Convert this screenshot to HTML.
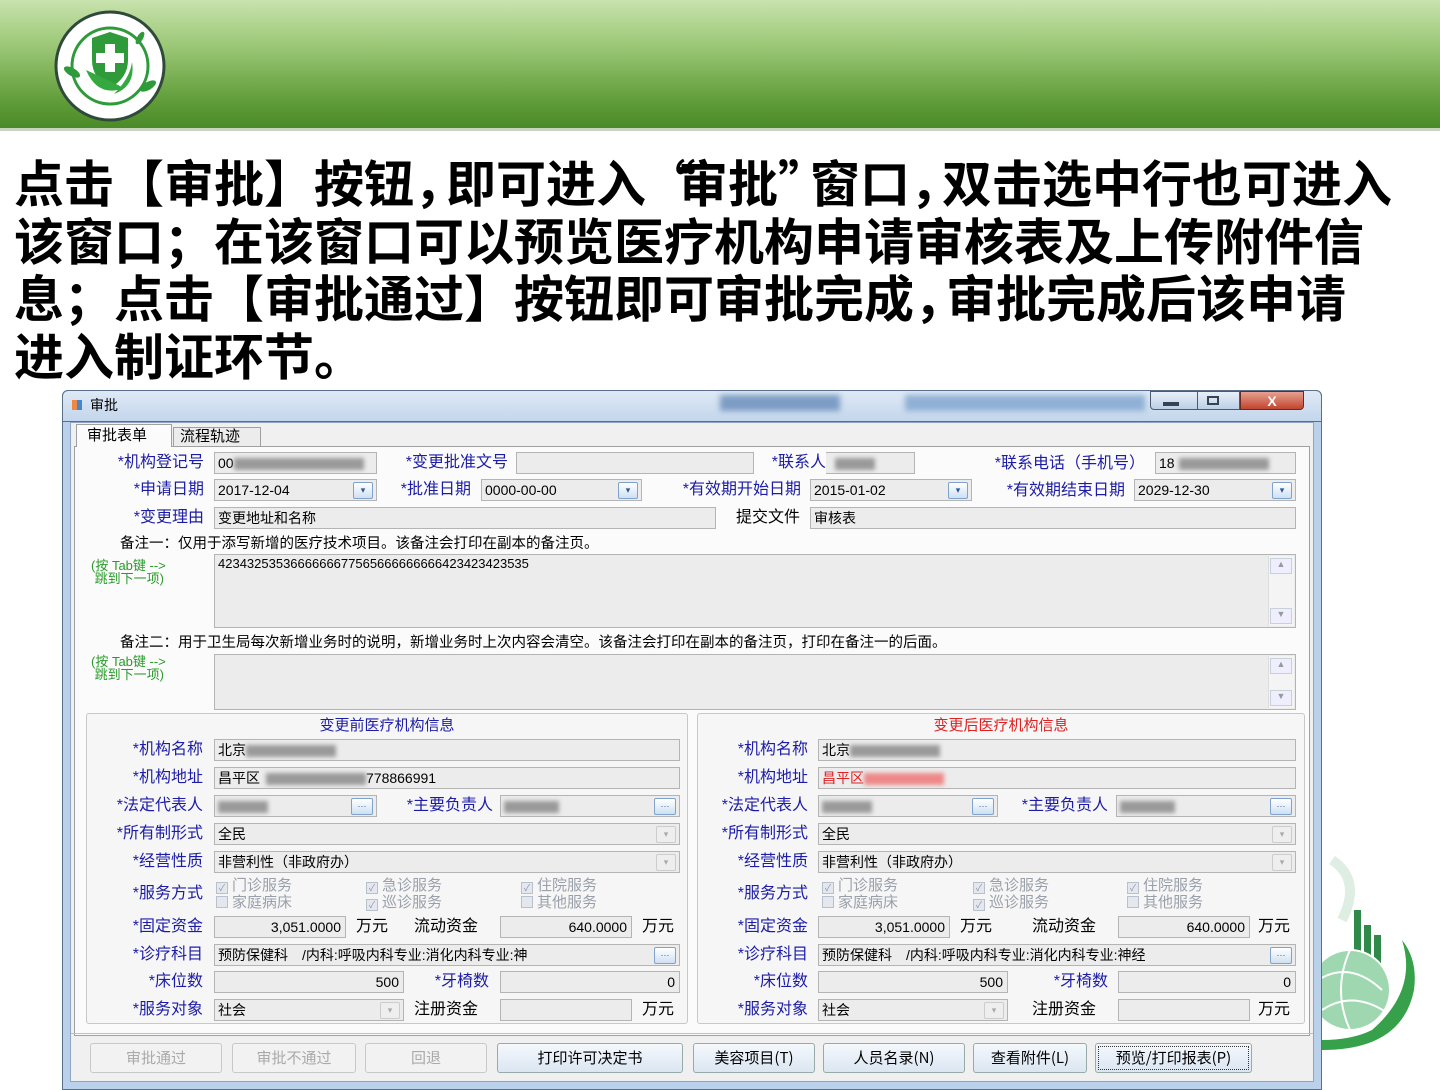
<!DOCTYPE html>
<html><head><meta charset="utf-8">
<style>
*{margin:0;padding:0;box-sizing:border-box}
body{width:1440px;height:1080px;position:relative;overflow:hidden;background:#fff;font-family:"Liberation Sans","Noto Sans CJK SC",sans-serif}
.hdr{position:absolute;left:0;top:0;width:1440px;height:128px;background:linear-gradient(#c9e3ae,#9cc877 35%,#5f9c38 80%,#4a8a28)}
.hline{position:absolute;left:0;top:128px;width:1440px;height:3px;background:#c8d4c0}
.title{position:absolute;left:14px;top:153px;width:1430px;font-size:50px;line-height:57.5px;font-weight:bold;color:#000;font-family:"Noto Sans CJK SC",sans-serif;white-space:nowrap}
.p{letter-spacing:-18px}
.a{position:absolute;white-space:nowrap}
.win{position:absolute;left:62px;top:390px;width:1260px;height:700px;background:#b9d1ea;border:1px solid #5a6f88;border-radius:6px 6px 0 0}
.tbar{position:absolute;left:62px;top:390px;width:1260px;height:32px;background:linear-gradient(#dfe9f5,#c3d6ec);border-radius:6px 6px 0 0;border:1px solid #5a6f88}
.client{position:absolute;left:70px;top:422px;width:1244px;height:660px;background:#f0f0f0;border:1px solid #8ea4c0}
.page{position:absolute;left:74px;top:446px;width:1236px;height:590px;background:#fbfbfb;border:1px solid #a0a0a0}
.lb{position:absolute;font-size:16px;color:#1c1ca8;text-align:right;white-space:nowrap;line-height:22px}
.bk{color:#000}
.in{position:absolute;height:22px;background:#ececec;border:1px solid #b4b4b4;font-size:14px;line-height:20px;padding-left:3px;color:#000;white-space:nowrap;overflow:hidden}
.r{text-align:right;padding-right:4px}
.dd{position:absolute;width:20px;height:17px;top:2px;right:3px;border:1px solid #7fa3cc;background:linear-gradient(#fff,#cfe0f3);border-radius:2px;font-size:9px;color:#2a5a9a;text-align:center;line-height:15px}
.dg{border-color:#ccc;background:#eee;color:#aaa}
.bl{display:inline-block;height:12px;background:#9a9a9a;vertical-align:middle;filter:blur(2px)}
.grp{position:absolute;border:1px solid #c8c8c8;border-radius:3px;background:#f6f6f6}
.ck{position:absolute;font-size:15px;color:#9aa0aa;white-space:nowrap;line-height:17px}
.ck i{display:inline-block;width:12px;height:12px;border:1px solid #b8c0cc;background:#e4e8ee;margin-right:4px;vertical-align:-1px;font-style:normal;font-size:9px;line-height:10px;text-align:center;color:#8a94a8}
.btn{position:absolute;top:1043px;height:30px;border:1px solid #9aa;border-radius:3px;background:linear-gradient(#f4f8fc,#dbe6f2);font-size:15px;text-align:center;line-height:28px;color:#000;font-family:"Noto Sans CJK SC",sans-serif}
.btn.d{background:#f2f2f2;color:#aaa;border-color:#c8c8c8}
</style></head><body>
<div class="hdr"></div><div class="hline"></div>
<svg class="a" style="left:52px;top:8px" width="116" height="116" viewBox="0 0 116 116">
<circle cx="58" cy="58" r="54" fill="#fff" stroke="#2f4a3a" stroke-width="3"/>
<circle cx="58" cy="58" r="38" fill="none" stroke="#2e9a3a" stroke-width="3"/>
<path d="M40 30 L58 24 L76 30 L76 52 Q76 70 58 80 Q40 70 40 52Z" fill="#2e9a3a"/>
<rect x="53" y="36" width="10" height="28" fill="#fff"/><rect x="44" y="45" width="28" height="10" fill="#fff"/>
<path d="M34 62 Q46 90 72 80 Q56 72 34 62Z" fill="#35a840"/>
<path d="M80 54 Q84 78 62 86 Q78 70 80 54Z" fill="#35a840"/>
<ellipse cx="20" cy="64" rx="9" ry="4" fill="#2e9a3a" transform="rotate(30 20 64)"/>
<ellipse cx="96" cy="78" rx="9" ry="4" fill="#2e9a3a" transform="rotate(-30 96 78)"/>
<ellipse cx="88" cy="30" rx="7" ry="3" fill="#2e9a3a" transform="rotate(-60 88 30)"/>
</svg>
<div class="title">点击【审批】按钮<span class="p">，</span>即可进入<span class="p">“</span>审批<span class="p">”</span>窗口<span class="p">，</span>双击选中行也可进入<br>该窗口；在该窗口可以预览医疗机构申请审核表及上传附件信<br>息；点击【审批通过】按钮即可审批完成<span class="p">，</span>审批完成后该申请<br>进入制证环节。</div>

<svg class="a" style="left:1322px;top:840px" width="118" height="220" viewBox="0 0 118 220">
<path d="M10 20 Q40 40 20 80" stroke="#dfeee2" stroke-width="10" fill="none"/>
<rect x="32" y="70" width="7" height="60" fill="#2f8a4a"/><rect x="42" y="85" width="7" height="45" fill="#2f8a4a"/><rect x="52" y="95" width="7" height="35" fill="#2f8a4a"/>
<circle cx="28" cy="150" r="40" fill="#9fd8b0" stroke="#fff" stroke-width="2"/>
<path d="M-4 140 Q28 120 60 150 M0 170 Q30 150 64 172 M28 110 Q10 150 28 190" stroke="#fff" stroke-width="2" fill="none"/>
<path d="M0 210 Q80 210 92 150 Q96 120 80 100 Q96 150 50 190 Q30 200 0 200Z" fill="#36a14a"/>
</svg>

<div class="win"></div>
<div class="tbar"></div>
<div class="a" style="left:72px;top:400px;width:10px;height:10px;background:linear-gradient(90deg,#e84 50%,#48c 50%)"></div>
<div class="a" style="left:90px;top:396px;font-size:14px;line-height:18px;color:#000">审批</div>
<div class="a" style="left:720px;top:395px;width:120px;height:16px;background:#7c9cc4;filter:blur(3px)"></div>
<div class="a" style="left:905px;top:395px;width:240px;height:16px;background:#8fb0d4;filter:blur(3px)"></div>
<div class="a" style="left:1150px;top:391px;width:90px;height:19px;border:1px solid #4a5a70;border-radius:0 0 0 4px;background:linear-gradient(#e8eff8,#bcd0e6)"></div>
<div class="a" style="left:1197px;top:391px;width:1px;height:19px;background:#4a5a70"></div>
<div class="a" style="left:1163px;top:402px;width:16px;height:4px;background:#345"></div>
<div class="a" style="left:1207px;top:396px;width:12px;height:9px;border:2px solid #345"></div>
<div class="a" style="left:1240px;top:391px;width:64px;height:19px;border:1px solid #6a2a20;border-radius:0 0 4px 0;background:linear-gradient(#e8a090,#c04530);color:#fff;font-weight:bold;text-align:center;font-size:14px;line-height:18px">X</div>

<div class="client"></div>
<div class="page"></div>
<div class="a" style="left:76px;top:424px;width:96px;height:23px;background:#fbfbfb;border:1px solid #a0a0a0;border-bottom:none;font-size:15px;line-height:22px;padding-left:10px">审批表单</div>
<div class="a" style="left:173px;top:427px;width:88px;height:19px;background:#ececec;border:1px solid #a0a0a0;border-bottom:none;font-size:15px;line-height:18px;padding-left:6px">流程轨迹</div>

<!-- row1 -->
<div class="lb" style="left:80px;top:452px;width:124px">*机构登记号</div>
<div class="in" style="left:214px;top:452px;width:163px">00<span class="bl" style="width:130px"></span></div>
<div class="lb" style="left:380px;top:452px;width:128px">*变更批准文号</div>
<div class="in" style="left:516px;top:452px;width:238px"></div>
<div class="lb" style="left:756px;top:452px;width:70px">*联系人</div>
<div class="in" style="left:826px;top:452px;width:89px;border-left:none"><span class="bl" style="width:40px;margin-left:6px"></span></div>
<div class="lb" style="left:960px;top:453px;width:185px">*联系电话（手机号）</div>
<div class="in" style="left:1155px;top:452px;width:141px">18<span class="bl" style="width:90px;margin-left:4px"></span></div>
<!-- row2 -->
<div class="lb" style="left:80px;top:479px;width:124px">*申请日期</div>
<div class="in" style="left:214px;top:479px;width:163px">2017-12-04<span class="dd">▾</span></div>
<div class="lb" style="left:380px;top:479px;width:91px">*批准日期</div>
<div class="in" style="left:481px;top:479px;width:161px">0000-00-00<span class="dd">▾</span></div>
<div class="lb" style="left:650px;top:479px;width:151px">*有效期开始日期</div>
<div class="in" style="left:810px;top:479px;width:162px">2015-01-02<span class="dd">▾</span></div>
<div class="lb" style="left:975px;top:480px;width:150px">*有效期结束日期</div>
<div class="in" style="left:1134px;top:479px;width:162px">2029-12-30<span class="dd">▾</span></div>
<!-- row3 -->
<div class="lb" style="left:80px;top:507px;width:124px">*变更理由</div>
<div class="in" style="left:214px;top:507px;width:502px">变更地址和名称</div>
<div class="lb bk" style="left:720px;top:507px;width:80px">提交文件</div>
<div class="in" style="left:810px;top:507px;width:486px">审核表</div>
<div class="a" style="left:120px;top:533px;font-size:14.5px;line-height:22px">备注一：仅用于添写新增的医疗技术项目。该备注会打印在副本的备注页。</div>
<div class="a" style="left:91px;top:559px;font-size:13px;line-height:13px;color:#2a9a2a">(按 Tab键 --&gt;<br>&nbsp;跳到下一项)</div>
<div class="in" style="left:214px;top:554px;width:1082px;height:74px;font-size:13px;line-height:18px">4234325353666666677565666666666423423423535</div>
<div class="a" style="left:1268px;top:556px;width:26px;height:70px;background:#f4f4f4;border-left:1px solid #ddd"></div>
<div class="a" style="left:1270px;top:558px;width:22px;height:16px;border:1px solid #c8d0da;background:#eef;font-size:9px;color:#999;text-align:center">▲</div>
<div class="a" style="left:1270px;top:608px;width:22px;height:16px;border:1px solid #c8d0da;background:#eef;font-size:9px;color:#999;text-align:center">▼</div>
<div class="a" style="left:120px;top:632px;font-size:14.5px;line-height:22px">备注二：用于卫生局每次新增业务时的说明，新增业务时上次内容会清空。该备注会打印在副本的备注页，打印在备注一的后面。</div>
<div class="a" style="left:91px;top:655px;font-size:13px;line-height:13px;color:#2a9a2a">(按 Tab键 --&gt;<br>&nbsp;跳到下一项)</div>
<div class="in" style="left:214px;top:654px;width:1082px;height:56px"></div>
<div class="a" style="left:1268px;top:656px;width:26px;height:52px;background:#f4f4f4;border-left:1px solid #ddd"></div>
<div class="a" style="left:1270px;top:658px;width:22px;height:16px;border:1px solid #c8d0da;background:#eef;font-size:9px;color:#999;text-align:center">▲</div>
<div class="a" style="left:1270px;top:690px;width:22px;height:16px;border:1px solid #c8d0da;background:#eef;font-size:9px;color:#999;text-align:center">▼</div>

<div class="grp" style="left:86px;top:713px;width:602px;height:311px"></div>
<div class="grp" style="left:697px;top:713px;width:608px;height:311px"></div>
<div class="a" style="left:86px;top:715px;width:602px;text-align:center;font-size:15px;color:#1c1ca8;line-height:21px">变更前医疗机构信息</div>
<div class="a" style="left:697px;top:715px;width:608px;text-align:center;font-size:15px;color:#e02020;line-height:21px">变更后医疗机构信息</div>

<!-- left group content -->
<div class="a" style="left:86px;top:713px;width:610px;height:311px">
<div class="lb" style="left:0;top:26px;width:117px">*机构名称</div>
<div class="in" style="left:128px;top:26px;width:466px">北京<span class="bl" style="width:90px"></span></div>
<div class="lb" style="left:0;top:54px;width:117px">*机构地址</div>
<div class="in" style="left:128px;top:54px;width:466px">昌平区<span class="bl" style="width:100px;margin-left:6px"></span>778866991</div>
<div class="lb" style="left:0;top:82px;width:117px">*法定代表人</div>
<div class="in" style="left:128px;top:82px;width:163px"><span class="bl" style="width:50px"></span><span class="dd" style="width:22px">···</span></div>
<div class="lb" style="left:290px;top:82px;width:117px">*主要负责人</div>
<div class="in" style="left:414px;top:82px;width:180px"><span class="bl" style="width:55px"></span><span class="dd" style="width:22px">···</span></div>
<div class="lb" style="left:0;top:110px;width:117px">*所有制形式</div>
<div class="in" style="left:128px;top:110px;width:466px">全民<span class="dd dg">▾</span></div>
<div class="lb" style="left:0;top:138px;width:117px">*经营性质</div>
<div class="in" style="left:128px;top:138px;width:466px">非营利性（非政府办）<span class="dd dg">▾</span></div>
<div class="lb" style="left:0;top:170px;width:117px">*服务方式</div>
<div class="ck" style="left:130px;top:164px"><i>✓</i>门诊服务</div>
<div class="ck" style="left:130px;top:181px"><i></i>家庭病床</div>
<div class="ck" style="left:280px;top:164px"><i>✓</i>急诊服务</div>
<div class="ck" style="left:280px;top:181px"><i>✓</i>巡诊服务</div>
<div class="ck" style="left:435px;top:164px"><i>✓</i>住院服务</div>
<div class="ck" style="left:435px;top:181px"><i></i>其他服务</div>
<div class="lb" style="left:0;top:203px;width:117px">*固定资金</div>
<div class="in r" style="left:128px;top:203px;width:132px">3,051.0000</div>
<div class="lb bk" style="left:270px;top:203px">万元</div>
<div class="lb bk" style="left:328px;top:203px">流动资金</div>
<div class="in r" style="left:414px;top:203px;width:132px">640.0000</div>
<div class="lb bk" style="left:556px;top:203px">万元</div>
<div class="lb" style="left:0;top:231px;width:117px">*诊疗科目</div>
<div class="in" style="left:128px;top:231px;width:466px">预防保健科　/内科:呼吸内科专业:消化内科专业:神<span class="dd" style="width:22px">···</span></div>
<div class="lb" style="left:0;top:258px;width:117px">*床位数</div>
<div class="in r" style="left:128px;top:258px;width:190px">500</div>
<div class="lb" style="left:300px;top:258px;width:103px">*牙椅数</div>
<div class="in r" style="left:414px;top:258px;width:180px">0</div>
<div class="lb" style="left:0;top:286px;width:117px">*服务对象</div>
<div class="in" style="left:128px;top:286px;width:190px">社会<span class="dd dg">▾</span></div>
<div class="lb bk" style="left:328px;top:286px">注册资金</div>
<div class="in" style="left:414px;top:286px;width:132px"></div>
<div class="lb bk" style="left:556px;top:286px">万元</div>
</div>

<!-- right group content -->
<div class="a" style="left:690px;top:713px;width:620px;height:311px">
<div class="lb" style="left:0;top:26px;width:118px">*机构名称</div>
<div class="in" style="left:128px;top:26px;width:478px">北京<span class="bl" style="width:90px"></span></div>
<div class="lb" style="left:0;top:54px;width:118px">*机构地址</div>
<div class="in" style="left:128px;top:54px;width:478px;color:#e02020">昌平区<span class="bl" style="width:80px;background:#e88"></span></div>
<div class="lb" style="left:0;top:82px;width:118px">*法定代表人</div>
<div class="in" style="left:128px;top:82px;width:180px"><span class="bl" style="width:50px"></span><span class="dd" style="width:22px">···</span></div>
<div class="lb" style="left:300px;top:82px;width:118px">*主要负责人</div>
<div class="in" style="left:426px;top:82px;width:180px"><span class="bl" style="width:55px"></span><span class="dd" style="width:22px">···</span></div>
<div class="lb" style="left:0;top:110px;width:118px">*所有制形式</div>
<div class="in" style="left:128px;top:110px;width:478px">全民<span class="dd dg">▾</span></div>
<div class="lb" style="left:0;top:138px;width:118px">*经营性质</div>
<div class="in" style="left:128px;top:138px;width:478px">非营利性（非政府办）<span class="dd dg">▾</span></div>
<div class="lb" style="left:0;top:170px;width:118px">*服务方式</div>
<div class="ck" style="left:132px;top:164px"><i>✓</i>门诊服务</div>
<div class="ck" style="left:132px;top:181px"><i></i>家庭病床</div>
<div class="ck" style="left:283px;top:164px"><i>✓</i>急诊服务</div>
<div class="ck" style="left:283px;top:181px"><i>✓</i>巡诊服务</div>
<div class="ck" style="left:437px;top:164px"><i>✓</i>住院服务</div>
<div class="ck" style="left:437px;top:181px"><i></i>其他服务</div>
<div class="lb" style="left:0;top:203px;width:118px">*固定资金</div>
<div class="in r" style="left:128px;top:203px;width:132px">3,051.0000</div>
<div class="lb bk" style="left:270px;top:203px">万元</div>
<div class="lb bk" style="left:342px;top:203px">流动资金</div>
<div class="in r" style="left:428px;top:203px;width:132px">640.0000</div>
<div class="lb bk" style="left:568px;top:203px">万元</div>
<div class="lb" style="left:0;top:231px;width:118px">*诊疗科目</div>
<div class="in" style="left:128px;top:231px;width:478px">预防保健科　/内科:呼吸内科专业:消化内科专业:神经<span class="dd" style="width:22px">···</span></div>
<div class="lb" style="left:0;top:258px;width:118px">*床位数</div>
<div class="in r" style="left:128px;top:258px;width:190px">500</div>
<div class="lb" style="left:310px;top:258px;width:108px">*牙椅数</div>
<div class="in r" style="left:428px;top:258px;width:178px">0</div>
<div class="lb" style="left:0;top:286px;width:118px">*服务对象</div>
<div class="in" style="left:128px;top:286px;width:190px">社会<span class="dd dg">▾</span></div>
<div class="lb bk" style="left:342px;top:286px">注册资金</div>
<div class="in" style="left:428px;top:286px;width:132px"></div>
<div class="lb bk" style="left:568px;top:286px">万元</div>
</div>

<div class="a" style="left:71px;top:1033px;width:1242px;height:1px;background:#c0c0c0"></div>
<div class="btn d" style="left:90px;width:132px">审批通过</div>
<div class="btn d" style="left:232px;width:124px">审批不通过</div>
<div class="btn d" style="left:365px;width:122px">回退</div>
<div class="btn" style="left:497px;width:186px">打印许可决定书</div>
<div class="btn" style="left:693px;width:122px">美容项目(T)</div>
<div class="btn" style="left:823px;width:142px">人员名录(N)</div>
<div class="btn" style="left:973px;width:114px">查看附件(L)</div>
<div class="btn" style="left:1095px;width:157px;outline:1px dotted #333;outline-offset:-4px">预览/打印报表(P)</div>
</body></html>
